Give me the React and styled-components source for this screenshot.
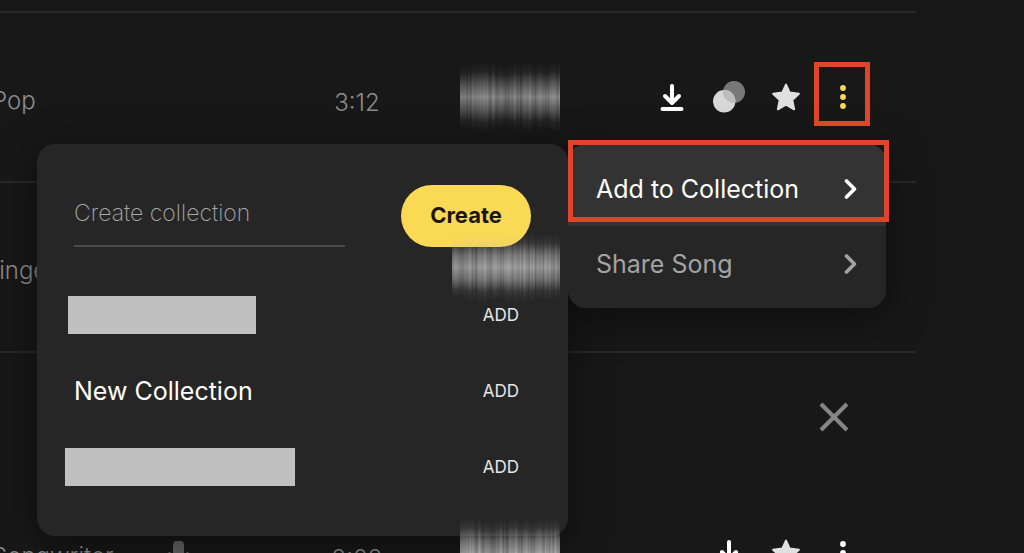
import React from 'react';
import styled, { createGlobalStyle } from 'styled-components';

const GlobalStyle = createGlobalStyle`
  * {
    box-sizing: border-box;
  }

  body {
    margin: 0;
    background: #181818;
    color: #fff;
    font-family: Inter, 'Liberation Sans', sans-serif;
    overflow: hidden;
  }

  button,
  input {
    font-family: inherit;
  }
`;

const Page = styled.main`
  height: 100vh;
  overflow: hidden;
  padding: 11px 108px 0 0;
`;

const SongRow = styled.div`
  display: grid;
  grid-template-columns: 168px 127px 124px 141px 1fr;
  height: 170px;
  border-top: 2px solid ${props => (props.$plain ? 'transparent' : '#292929')};
`;

const Cell = styled.div`
  display: flex;
  align-items: center;
  height: 174px;
  color: #8c8c8c;
  font-size: 24px;
  font-weight: 300;
  white-space: nowrap;
`;

const Genre = styled(Cell)`
  margin-left: ${props => props.$bleed}px;
`;

const Time = styled(Cell)`
  justify-content: center;
  height: 178px;
`;

const WaveCell = styled.div`
  display: flex;
  align-items: center;
  justify-content: flex-end;
  height: 168px;
  z-index: 3;
  pointer-events: none;

  svg {
    flex-shrink: 0;
  }
`;

const Actions = styled.div`
  display: flex;
  align-items: center;
  justify-content: flex-end;
  gap: 25px;
  height: 168px;
  padding-right: 57px;
`;

const IconButton = styled.button`
  display: flex;
  align-items: center;
  justify-content: center;
  width: 32px;
  height: 32px;
  padding: 0;
  border: 0;
  background: none;
  color: ${props => props.$color || '#fff'};
`;

const MoreWrapper = styled.div`
  position: relative;
`;

const Highlight = styled.span`
  position: absolute;
  inset: ${props => props.$inset};
  border: 5px solid #e0452c;
  pointer-events: none;
  z-index: 5;
`;

const Menu = styled.div`
  position: absolute;
  top: 63px;
  right: -27px;
  width: 318px;
  border-radius: 18px;
  background: #262626;
  box-shadow: 0 8px 40px rgba(0, 0, 0, 0.5);
  z-index: 2;
`;

const MenuItem = styled.button`
  position: relative;
  display: flex;
  align-items: center;
  justify-content: space-between;
  width: 100%;
  height: 82px;
  padding: ${props => (props.$active ? '8px 28px 0' : '0 28px 6px')};
  border: 0;
  border-radius: ${props => (props.$active ? '18px 18px 0 0' : '0 0 18px 18px')};
  background: ${props => (props.$active ? '#333' : '#262626')};
  color: ${props => (props.$active ? '#fff' : '#a3a3a3')};
  font-size: 25px;
`;

const Collections = styled.section`
  position: absolute;
  top: 0;
  right: 100%;
  width: 531px;
  padding: 41px 37px 31px;
  border-radius: 18px;
  background: #262626;
  box-shadow: 0 8px 40px rgba(0, 0, 0, 0.5);
`;

const CreateForm = styled.form`
  display: flex;
  justify-content: space-between;
  margin-bottom: 30px;
`;

const NameInput = styled.input`
  width: 271px;
  height: 62px;
  padding: 0 0 4px;
  border: 0;
  border-bottom: 2px solid #4a4a4a;
  background: none;
  color: #fff;
  font-size: 23px;
  font-weight: 200;
  outline: none;

  &::placeholder {
    color: #a8a8a8;
    opacity: 1;
  }
`;

const CreateButton = styled.button`
  width: 130px;
  height: 62px;
  padding: 0 0 2px;
  border: 0;
  border-radius: 31px;
  background: #fad955;
  color: #1a1609;
  font-size: 22px;
  font-weight: 700;
`;

const CollectionRow = styled.div`
  display: flex;
  align-items: center;
  justify-content: space-between;
  height: 76px;
  padding-right: 12px;
  font-size: 25px;
`;

const Redacted = styled.span`
  width: ${props => props.$width}px;
  height: 38px;
  margin-left: ${props => props.$outdent}px;
  background: #c0c0c0;
`;

const AddButton = styled.button`
  padding: 0;
  border: 0;
  background: none;
  color: #e6e6e6;
  font-size: 17px;
`;

const Expanded = styled.div`
  display: flex;
  align-items: center;
  justify-content: flex-end;
  height: 116px;
  padding: 14px 66px 0 0;
  border-top: 2px solid #292929;
`;

const DownloadIcon = () => (
  <svg width="24" height="28" viewBox="0 0 24 28" fill="none" stroke="currentColor" strokeWidth="4" strokeLinecap="round" strokeLinejoin="round">
    <path d="M12 3v16M5 13l7 7 7-7" />
    <path d="M2.5 26h19" />
  </svg>
);

const SimilarIcon = () => (
  <svg width="32" height="32" viewBox="0 0 32 32">
    <circle cx="21" cy="11" r="11" fill="#787878" />
    <circle cx="11.2" cy="20.3" r="11.2" fill="#d8d8d8" />
    <path d="M10 9.2A11.2 11.2 0 0 1 22.3 21.8A11 11 0 0 1 10 9.2Z" fill="#bdbdbd" />
  </svg>
);

const StarIcon = () => (
  <svg width="28" height="28" viewBox="0 0 28 28" fill="#e0e0e0" stroke="#e0e0e0" strokeWidth="2" strokeLinejoin="round">
    <path d="M14 1.6l3.7 8 9.2 1.1-6.6 6.2 1.8 9.4L14 21.6l-8.1 4.7 1.8-9.4-6.6-6.2 9.2-1.1z" />
  </svg>
);

const MoreIcon = () => (
  <svg width="8" height="26" viewBox="0 0 8 26" fill="currentColor">
    <circle cx="4" cy="4" r="2.9" />
    <circle cx="4" cy="13" r="2.9" />
    <circle cx="4" cy="22" r="2.9" />
  </svg>
);

const ChevronIcon = () => (
  <svg width="14" height="22" viewBox="0 0 14 22" fill="none" stroke="currentColor" strokeWidth="3.6" strokeLinecap="round" strokeLinejoin="round">
    <path d="M2.5 3l8 8-8 8" />
  </svg>
);

const CloseIcon = () => (
  <svg width="32" height="32" viewBox="0 0 32 32" fill="none" stroke="currentColor" strokeWidth="4.2">
    <path d="M3 3l26 26M29 3L3 29" />
  </svg>
);

const MicIcon = () => (
  <svg width="22" height="30" viewBox="0 0 22 30" fill="none" stroke="#656565" strokeWidth="2">
    <rect x="5" y="-1" width="11" height="19" rx="5" fill="#656565" stroke="none" />
    <path d="M1.5 11v3a9 9 0 0 0 18 0v-3M11 24v6" />
  </svg>
);

const noiseAt = n => Math.abs(Math.sin(n * 12.9898) * 43758.5453) % 1;

// thin vertical bars that fade out above and below the middle line
const Wave = ({ id, width, seed, level }) => {
  const bars = [];
  for (let x = 0; x < width; x += 1) {
    const noise = (noiseAt(x + seed) + noiseAt(x + seed + 1)) / 2;
    const swell = Math.abs(Math.sin((x + seed) / 14));
    const height = 58 + noise * 12 + swell * 4;
    bars.push(
      <rect
        key={x}
        x={x}
        y={38 - height / 2}
        width="1"
        height={height}
        fill={`url(#${id})`}
        opacity={level * (0.65 + noise * 0.35)}
      />
    );
  }
  return (
    <svg width={width} height="76" viewBox={`0 0 ${width} 76`} aria-hidden="true">
      <defs>
        <linearGradient id={id} x1="0" y1="0" x2="0" y2="1">
          <stop offset="0" stopColor="#bbb" stopOpacity="0" />
          <stop offset="0.14" stopColor="#bbb" stopOpacity={0.12 * level} />
          <stop offset="0.32" stopColor="#bbb" stopOpacity={0.6 * level} />
          <stop offset="0.5" stopColor="#bbb" stopOpacity="0.88" />
          <stop offset="0.68" stopColor="#bbb" stopOpacity={0.6 * level} />
          <stop offset="0.86" stopColor="#bbb" stopOpacity={0.12 * level} />
          <stop offset="1" stopColor="#bbb" stopOpacity="0" />
        </linearGradient>
      </defs>
      {bars}
    </svg>
  );
};

const CollectionPanel = () => (
  <Collections>
    <CreateForm onSubmit={event => event.preventDefault()}>
      <NameInput aria-label="Create collection" placeholder="Create collection" />
      <CreateButton type="submit">Create</CreateButton>
    </CreateForm>
    <CollectionRow>
      <Redacted $width={188} $outdent={-6} />
      <AddButton>ADD</AddButton>
    </CollectionRow>
    <CollectionRow>
      <span>New Collection</span>
      <AddButton>ADD</AddButton>
    </CollectionRow>
    <CollectionRow>
      <Redacted $width={230} $outdent={-9} />
      <AddButton>ADD</AddButton>
    </CollectionRow>
  </Collections>
);

const SongMenu = () => (
  <Menu>
    <CollectionPanel />
    <MenuItem $active>
      Add to Collection
      <ChevronIcon />
      <Highlight $inset="-4px -3px 4px 0" />
    </MenuItem>
    <MenuItem>
      Share Song
      <ChevronIcon />
    </MenuItem>
  </Menu>
);

const Song = ({ song }) => (
  <SongRow $plain={song.plain}>
    <Genre $bleed={song.bleed}>{song.genre}</Genre>
    <Cell>{song.vocal && <MicIcon />}</Cell>
    <Time>{song.time}</Time>
    <WaveCell>
      <Wave id={`wave-${song.id}`} width={song.waveWidth} seed={song.seed} level={song.level} />
    </WaveCell>
    <Actions>
      <IconButton aria-label="Download"><DownloadIcon /></IconButton>
      {song.similar && <IconButton aria-label="Find similar"><SimilarIcon /></IconButton>}
      <IconButton aria-label="Favorite"><StarIcon /></IconButton>
      <MoreWrapper>
        <IconButton aria-label="More" $color={song.open ? '#fad955' : '#fff'}><MoreIcon /></IconButton>
        {song.open && <Highlight $inset="-19px -11px -13px -13px" />}
        {song.open && <SongMenu />}
      </MoreWrapper>
    </Actions>
  </SongRow>
);

const songs = [
  { id: 1, genre: 'Pop', bleed: -8, time: '3:12', waveWidth: 100, seed: 3, level: 0.85, similar: true, open: true },
  { id: 2, genre: 'Singer', bleed: -16, time: '', waveWidth: 108, seed: 40, level: 1, similar: true },
  { id: 3, genre: 'Songwriter', bleed: -8, time: '2:02', waveWidth: 100, seed: 17, level: 1, vocal: true, plain: true },
];

const App = () => (
  <>
    <GlobalStyle />
    <Page>
      <Song song={songs[0]} />
      <Song song={songs[1]} />
      <Expanded>
        <IconButton aria-label="Close" $color="#858585"><CloseIcon /></IconButton>
      </Expanded>
      <Song song={songs[2]} />
    </Page>
  </>
);

export default App;
